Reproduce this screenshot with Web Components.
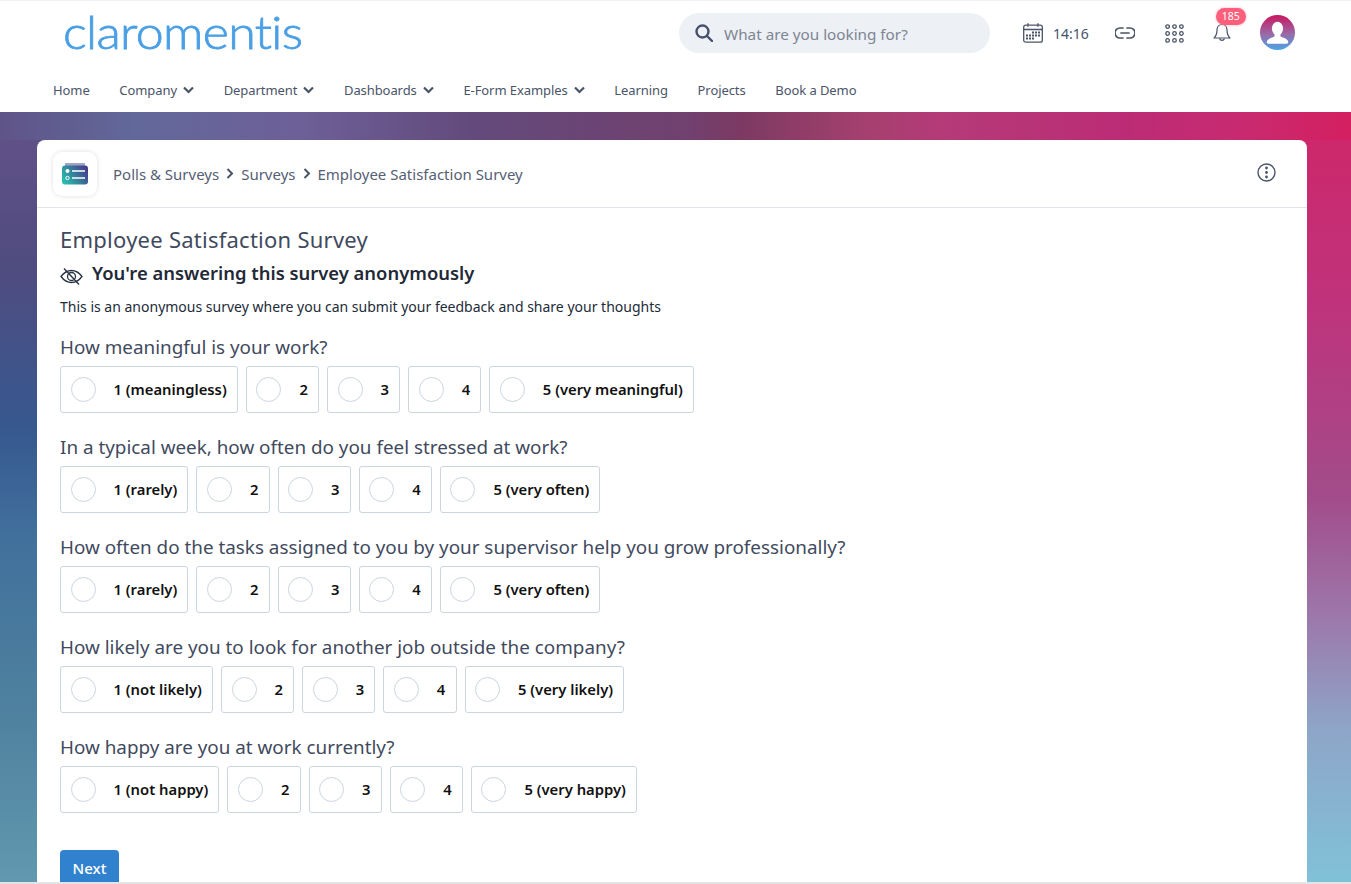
<!DOCTYPE html>
<html lang="en">
<head>
<meta charset="utf-8">
<title>Employee Satisfaction Survey</title>
<style>
html, body { margin: 0; height: 100%; }
body {
  height: 884px;
  overflow: hidden;
  font-family: "Noto Sans", sans-serif;
  color: #3f4a5e;
  background: #fff;
  display: flex;
  flex-direction: column;
}
</style>
</head>
<body>
<top-bar></top-bar>
<nav-bar></nav-bar>
<survey-page>
  <survey-card>
    <survey-question text="How meaningful is your work?" options="1 (meaningless),2,3,4,5 (very meaningful)"></survey-question>
    <survey-question text="In a typical week, how often do you feel stressed at work?" options="1 (rarely),2,3,4,5 (very often)"></survey-question>
    <survey-question text="How often do the tasks assigned to you by your supervisor help you grow professionally?" options="1 (rarely),2,3,4,5 (very often)"></survey-question>
    <survey-question text="How likely are you to look for another job outside the company?" options="1 (not likely),2,3,4,5 (very likely)"></survey-question>
    <survey-question text="How happy are you at work currently?" options="1 (not happy),2,3,4,5 (very happy)"></survey-question>
  </survey-card>
</survey-page>
<script>
class TopBar extends HTMLElement {
  constructor() {
    super();
    this.attachShadow({ mode: "open" }).innerHTML = `<style>
:host { display: flex; align-items: center; height: 67px; flex: none; box-sizing: border-box; background: #fff; border-top: 1px solid #f2f2f2; padding-bottom: 2px; }
.logo { margin: -2px 0 0 63px; width: 616px; font: 300 46px/1 Lato, sans-serif; color: #4a9fe5; letter-spacing: -.6px; -webkit-text-stroke: .8px #4a9fe5; transform: scaleX(1.09); transform-origin: left; }
.search { width: 311px; height: 40px; border-radius: 20px; background: #edf0f5; display: flex; align-items: center; box-sizing: border-box; padding-left: 16px; gap: 11px; font-size: 15.25px; color: #7e8593; margin-right: 33px; }
.search span { margin-top: 2px; }
.icons { display: flex; align-items: center; color: #4a5468; }
.time { font-size: 14px; margin: 0 26px 0 10px; color: #46526a; }
.bell { position: relative; margin: 0 29px 0 29px; display: flex; }
.badge { position: absolute; left: 3px; top: -15px; width: 30px; height: 17px; border-radius: 9px; background: #fb5f7b; color: #fff; font-size: 10.5px; line-height: 17px; text-align: center; box-shadow: 0 0 3px #ffb0c0; }
.avatar { margin-top: -2px; }
svg { display: block; }
</style>
<div class="logo">claromentis</div>
<div class="search">
  <svg width="18" height="18" viewBox="0 0 18 18" fill="none" stroke="#46506a" stroke-width="2.4"><circle cx="7.5" cy="7.5" r="6"/><path d="M12 12l5 5" stroke-linecap="round"/></svg>
  <span>What are you looking for?</span>
</div>
<div class="icons">
  <svg width="20" height="20" viewBox="0 0 20 20" fill="none" stroke="#4a5468" stroke-width="1.3"><rect x=".7" y="2.2" width="18.6" height="17" rx="2"/><path d="M.7 6.5h18.6M5 .3v3.4M15 .3v3.4"/><g fill="#4a5468" stroke="none"><rect x="9" y="8.5" width="2" height="2"/><rect x="12" y="8.5" width="2" height="2"/><rect x="15" y="8.5" width="2" height="2"/><rect x="3" y="11.5" width="2" height="2"/><rect x="6" y="11.5" width="2" height="2"/><rect x="9" y="11.5" width="2" height="2"/><rect x="12" y="11.5" width="2" height="2"/><rect x="15" y="11.5" width="2" height="2"/><rect x="3" y="14.5" width="2" height="2"/><rect x="6" y="14.5" width="2" height="2"/><rect x="9" y="14.5" width="2" height="2"/></g></svg>
  <span class="time">14:16</span>
  <svg width="20" height="12" viewBox="0 0 20 12" fill="none" stroke="#4a5468" stroke-width="1.7" stroke-linecap="round"><path d="M8 1H5a4.7 4.7 0 0 0 0 10h3M12 1h3a4.7 4.7 0 0 1 0 10h-3M6 6h8"/></svg>
  <svg style="margin-left:30px" width="19" height="19" viewBox="0 0 19 19" fill="none" stroke="#4a5468" stroke-width="1.3"><circle cx="2.6" cy="2.6" r="1.8"/><circle cx="9.5" cy="2.6" r="1.8"/><circle cx="16.4" cy="2.6" r="1.8"/><circle cx="2.6" cy="9.5" r="1.8"/><circle cx="9.5" cy="9.5" r="1.8"/><circle cx="16.4" cy="9.5" r="1.8"/><circle cx="2.6" cy="16.4" r="1.8"/><circle cx="9.5" cy="16.4" r="1.8"/><circle cx="16.4" cy="16.4" r="1.8"/></svg>
  <div class="bell">
    <svg width="18" height="20" viewBox="0 0 18 20" fill="none" stroke="#4a5468" stroke-width="1.2" stroke-linejoin="round"><path d="M9 1.500c-3.200 0-5 2.600-5 5.500 0 3.600-.9 6-3 8h16c-2.100-2-3-4.400-3-8 0-2.900-1.800-5.500-5-5.500z"/><path d="M6.500 15.500a2.600 2.600 0 0 0 5 0"/><path d="M9 0v1.500"/></svg>
    <span class="badge">185</span>
  </div>
  <svg class="avatar" width="35" height="35" viewBox="0 0 35 35"><defs><linearGradient id="av" x1=".5" y1="0" x2=".5" y2="1"><stop offset="0" stop-color="#c8175f"/><stop offset=".55" stop-color="#9a6aa8"/><stop offset="1" stop-color="#4aa5e6"/></linearGradient><clipPath id="c"><circle cx="17.5" cy="17.5" r="17.5"/></clipPath></defs><circle cx="17.5" cy="17.5" r="17.5" fill="url(#av)"/><g clip-path="url(#c)" fill="#fff"><ellipse cx="17.5" cy="13.5" rx="5.6" ry="6.8"/><path d="M14.500 18h6v3.500c3 1.200 6.500 2.200 7.500 4.500.6 1.400 0 2.800-1.500 2.800H8.500c-1.500 0-2.100-1.400-1.500-2.800 1-2.300 4.500-3.300 7.500-4.500z"/></g></svg>
</div>`;
  }
}

class NavBar extends HTMLElement {
  constructor() {
    super();
    const items = [["Home"], ["Company", 1], ["Department", 1], ["Dashboards", 1], ["E-Form Examples", 1], ["Learning"], ["Projects"], ["Book a Demo"]];
    const chev = `<svg width="11" height="8" viewBox="0 0 11 8" fill="none" stroke="#4a5468" stroke-width="2.2"><path d="M1 1.500l4.500 4.500L10 1.500"/></svg>`;
    this.attachShadow({ mode: "open" }).innerHTML = `<style>
:host { display: flex; align-items: center; height: 45px; flex: none; background: #fff; padding: 1px 0 0 53px; gap: 29.7px; font-size: 13px; letter-spacing: -.08px; color: #4a5468; box-sizing: border-box; }
span { display: flex; align-items: center; gap: 6px; }
</style>` + items.map(([t, c]) => `<span>${t}${c ? chev : ""}</span>`).join("");
  }
}

class SurveyPage extends HTMLElement {
  constructor() {
    super();
    this.attachShadow({ mode: "open" }).innerHTML = `<style>
:host { display: block; flex: 1; min-height: 0; overflow: hidden; padding: 28px 44px 0 37px; border-bottom: 2px solid #e4e4e4;
  background:
    linear-gradient(90deg, #5f5488 0%, #62689a 10%, #6d6098 22%, #634a7c 35%, #71406e 51%, #7c3a62 55%, #a5406f 64%, #b53a78 70%, #bb2c76 83%, #c82a70 92%, #d41f60 100%) 0 0 / 100% 28px no-repeat,
    linear-gradient(180deg, #635288 0%, #504c80 20%, #36588f 41%, #41709c 55%, #50839f 80%, #6298b0 100%) 0 0 / 46px 100% no-repeat,
    linear-gradient(180deg, #cf2668 0%, #bf337c 25%, #a24c8a 50%, #9d76aa 65%, #8ea5c8 80%, #80c2d8 100%) 100% 0 / 53px 100% no-repeat;
}
</style><slot></slot>`;
  }
}

class SurveyCard extends HTMLElement {
  constructor() {
    super();
    this.attachShadow({ mode: "open" }).innerHTML = `<style>
:host { display: block; height: 760px; background: #fff; border-radius: 8px 8px 0 0; }
.head { height: 68px; box-sizing: border-box; border-bottom: 1px solid #e2e4ea; display: flex; align-items: center; padding-left: 16px; font-size: 15px; color: #566074; }
.app { width: 44px; height: 44px; border-radius: 9px; box-shadow: 0 0 5px rgba(0,0,0,.13); display: flex; align-items: center; justify-content: center; margin-right: 16px; }
.crumb { display: flex; align-items: center; gap: 7px; flex: 1; }
.more { margin-right: 31px; margin-top: -3px; }
.body { padding: 16px 23px 0; }
h1 { margin: 0; font-size: 22px; font-weight: 400; line-height: 30px; color: #3f4a5e; letter-spacing: .25px; }
.anon { display: flex; align-items: center; gap: 9px; margin-top: 4px; height: 28px; font-size: 18.4px; font-weight: 600; color: #1f2937; }
.anon svg { margin-top: 8px; }
p { margin: 10px 0 0; font-size: 14px; line-height: 21px; color: #222b38; }
.next { display: block; margin-top: 33px; width: 59px; height: 38px; box-sizing: border-box; border: 0; border-radius: 4px; padding: 0 0 2px; background: #3182ce; color: #fff; font: 500 15px "Noto Sans", sans-serif; }
svg { display: block; }
</style>
<div class="head">
  <div class="app"><svg width="26" height="22" viewBox="0 0 26 22"><defs><linearGradient id="g" x1="0" y1=".8" x2="1" y2=".3"><stop offset="0" stop-color="#26c2ae"/><stop offset="1" stop-color="#453f8a"/></linearGradient></defs><rect x="3" y="0" width="20" height="4" rx="1" fill="#a3a3c9"/><rect x="0" y="2.500" width="26" height="19" rx="3" fill="url(#g)"/><circle cx="5.500" cy="8" r="2" fill="#fff"/><circle cx="5.500" cy="15" r="1.700" fill="none" stroke="#fff"/><path d="M10 8h13M10 15h13" stroke="#fff" stroke-width="1.600"/></svg></div>
  <div class="crumb"><span>Polls &amp; Surveys</span>${this.sep()}<span>Surveys</span>${this.sep()}<span>Employee Satisfaction Survey</span></div>
  <svg class="more" width="19" height="19" viewBox="0 0 19 19" fill="none" stroke="#4a5468" stroke-width="1.400"><circle cx="9.500" cy="9.500" r="8.500"/><g fill="#4a5468" stroke="none"><circle cx="9.500" cy="5" r="1.400"/><circle cx="9.500" cy="9.500" r="1.400"/><circle cx="9.500" cy="14" r="1.400"/></g></svg>
</div>
<div class="body">
  <h1>Employee Satisfaction Survey</h1>
  <div class="anon"><svg width="23" height="19" viewBox="0 0 23 19" fill="none" stroke="#2a3342" stroke-width="1.300"><path d="M1 9.500C4 5.500 7.500 3.500 11.500 3.500s7.500 2 10.500 6c-3 4-6.500 6-10.500 6S4 13.500 1 9.500z"/><circle cx="11.500" cy="9.500" r="4"/><path d="M4 1.500l15 16"/><path d="M6 4l12 12" stroke-width=".8"/></svg><span>You're answering this survey anonymously</span></div>
  <p>This is an anonymous survey where you can submit your feedback and share your thoughts</p>
  <slot></slot>
  <button class="next">Next</button>
</div>`;
  }
  sep() {
    return `<svg width="8" height="11" viewBox="0 0 8 11" fill="none" stroke="#4a5468" stroke-width="2"><path d="M1.500 1l4.500 4.500L1.500 10"/></svg>`;
  }
}

class SurveyQuestion extends HTMLElement {
  connectedCallback() {
    const options = this.getAttribute("options").split(",");
    this.attachShadow({ mode: "open" }).innerHTML = `<style>
:host { display: block; height: 100px; }
.q { font-size: 18.85px; line-height: 28px; color: #3f4a5e; padding-top: 16px; height: 28px; }
.opts { display: flex; gap: 8px; margin-top: 5px; }
</style>
<div class="q">${this.getAttribute("text")}</div>
<div class="opts">${options.map((o) => `<survey-option>${o}</survey-option>`).join("")}</div>`;
  }
}

class SurveyOption extends HTMLElement {
  constructor() {
    super();
    this.attachShadow({ mode: "open" }).innerHTML = `<style>
:host { display: flex; align-items: center; height: 47px; box-sizing: border-box; border: 1px solid #cbd5e0; border-radius: 3px; padding: 0 10.2px 2px 9.5px; font-size: 14.8px; font-weight: 600; color: #111; }
i { width: 25px; height: 25px; border: 1px solid #cbd5e0; border-radius: 50%; box-sizing: border-box; margin: 2px 18px 0 0; }
</style><i></i><slot></slot>`;
  }
}

customElements.define("top-bar", TopBar);
customElements.define("nav-bar", NavBar);
customElements.define("survey-page", SurveyPage);
customElements.define("survey-card", SurveyCard);
customElements.define("survey-question", SurveyQuestion);
customElements.define("survey-option", SurveyOption);
</script>
</body>
</html>
